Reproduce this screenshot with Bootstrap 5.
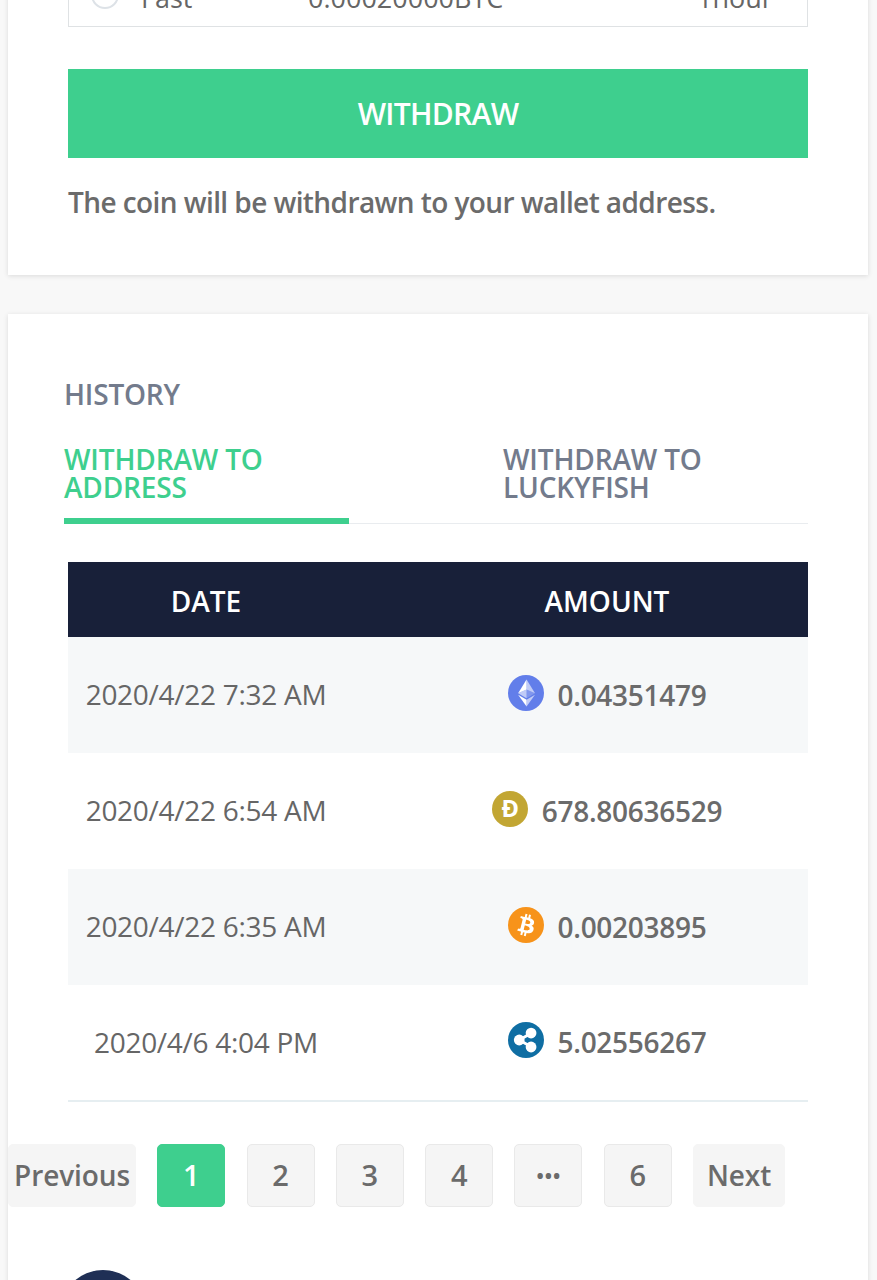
<!DOCTYPE html>
<html lang="en"><head><meta charset="utf-8"><title>Withdraw</title>
<link rel="stylesheet" href="https://cdn.jsdelivr.net/npm/bootstrap@5.3.0/dist/css/bootstrap.min.css">
<style>
html,body{height:1280px;overflow:hidden}
body{background:#f8f8f8;font-family:"Open Sans","Liberation Sans",sans-serif;color:#666;padding:0 9px 0 8px}
.panel{background:#fff;box-shadow:0 1px 5px rgba(0,0,0,.12)}
.panel-top{margin-top:-59px;height:334px;padding:0 60px;margin-bottom:39px}
.fee-box{height:86px;border:1px solid #dfe2e4;border-top:0;font-size:27px;font-weight:500;line-height:34px;padding-top:40px}
.fee-radio{width:28px;height:28px;border:2px solid #dde2e7;border-radius:50%;margin:0 22px 0 22px;flex:none}
.fee-name{width:167px}.fee-amt{width:389px}
.btn-withdraw{display:block;width:100%;height:89px;margin-top:42px;background:#3ecf8e;border:0;border-radius:0;color:#fff;font-size:30px;font-weight:600;letter-spacing:-.7px}
.btn-withdraw:hover{background:#3ecf8e;color:#fff}
.note{font-size:28px;font-weight:600;line-height:36px;margin:26px 0 0;letter-spacing:-.58px;color:#6b6b6b}
.panel-hist{height:1000px;padding:62px 60px 0}
.hist-title{font-size:28px;font-weight:600;color:#737b8c;line-height:36px;margin:0 0 0 -4px;letter-spacing:-.2px}
.tabs{margin:26px 0 38px -4px;border-bottom:1px solid #e9ecef;display:grid;grid-template-columns:285px 1fr}
.tabs a{display:block;font-size:28px;font-weight:600;line-height:28px;padding:7px 0 17px;color:#737b8c;text-decoration:none;letter-spacing:-.15px;margin-bottom:-1px;border-bottom:6px solid transparent}
.tabs a.on{color:#3ecf8e;border-bottom-color:#3ecf8e}
.tabs a+a{padding-left:154px}
.hist{--bs-table-bg:transparent;--bs-table-border-color:transparent;margin:0;border-bottom:2px solid #e6eef1;table-layout:fixed;color:#666}
.hist th{background:#182039;color:#fff;height:75px;font-size:28px;font-weight:600;vertical-align:middle;text-align:center;padding:2px 0 0;letter-spacing:0;border:0}
.hist td{height:116px;font-size:28px;vertical-align:middle;text-align:center;padding:0 0 2px;color:#666;letter-spacing:-.28px;border:0}
.hist tr>:first-child{width:338px;padding-right:62px}
.hist tbody tr:nth-child(odd) td{background:#f6f8f9}
.amt{display:inline-flex;align-items:center;gap:14px;font-weight:600;height:40px;vertical-align:middle;margin-top:-6px;color:#6b6b6b}
.amt svg{width:36px;height:36px;flex:none;margin-top:-4px}
.pager{list-style:none;margin:42px 0 0 -60px;padding:0;display:flex;gap:21.3px}
.pager a{display:flex;align-items:center;justify-content:center;width:68px;height:63px;padding-bottom:1px;background:#f5f5f5;border:1px solid #e9e9e9;border-radius:5px;color:#6b6b6b;font-size:29px;font-weight:600;text-decoration:none}
.pager .on a{background:#3ecf8e;border-color:#3ecf8e;color:#fff}
.pager .txt a{border-color:#f5f5f5;padding-bottom:1px;font-size:28px;letter-spacing:-.1px}
.pager .prev a{width:128px}.pager .nxt a{width:92px}
.pager .more{font-size:22px}
.avatar{width:86px;height:86px;border-radius:50%;background:#1f2f55;margin:63px 0 0 -8px}
</style></head>
<body>
<section class="panel panel-top">
  <div class="fee-box d-flex">
    <span class="fee-radio"></span><span class="fee-name">Fast</span><span class="fee-amt">0.00020000BTC</span><span>1hour</span>
  </div>
  <button class="btn btn-withdraw" type="button">WITHDRAW</button>
  <p class="note">The coin will be withdrawn to your wallet address.</p>
</section>
<section class="panel panel-hist">
  <h2 class="hist-title">HISTORY</h2>
  <nav class="tabs"><a class="on" href="#">WITHDRAW TO ADDRESS</a><a href="#">WITHDRAW TO LUCKYFISH</a></nav>
  <table class="table hist">
    <thead><tr><th>DATE</th><th>AMOUNT</th></tr></thead>
    <tbody>
      <tr><td>2020/4/22 7:32 AM</td><td><span class="amt">
        <svg viewBox="0 0 32 32"><circle cx="16" cy="16" r="16" fill="#627eea"/><path fill="#fff" fill-opacity=".6" d="M16.5 4v8.9l7.5 3.3z"/><path fill="#fff" d="M16.5 4 9 16.2l7.5-3.3z"/><path fill="#fff" fill-opacity=".6" d="M16.5 22v6L24 17.6z"/><path fill="#fff" d="M16.5 28v-6L9 17.6z"/><path fill="#fff" fill-opacity=".2" d="m16.5 20.6 7.5-4.4-7.5-3.3z"/><path fill="#fff" fill-opacity=".6" d="m9 16.2 7.5 4.4v-7.7z"/></svg>0.04351479</span></td></tr>
      <tr><td>2020/4/22 6:54 AM</td><td><span class="amt">
        <svg viewBox="0 0 32 32"><circle cx="16" cy="16" r="16" fill="#c2a633"/><text x="16" y="23.5" text-anchor="middle" font-family="Open Sans" font-weight="700" font-size="21" fill="#fff">Ð</text></svg>678.80636529</span></td></tr>
      <tr><td>2020/4/22 6:35 AM</td><td><span class="amt">
        <svg viewBox="0 0 32 32"><circle cx="16" cy="16" r="16" fill="#f7931a"/><path fill="#fff" d="M23.189 14.02c.314-2.096-1.283-3.223-3.465-3.975l.708-2.84-1.728-.43-.69 2.765c-.454-.114-.92-.22-1.385-.326l.695-2.783L15.596 6l-.708 2.839c-.376-.086-.746-.17-1.104-.26l.002-.009-2.384-.595-.46 1.846s1.283.294 1.256.312c.7.175.826.638.805 1.006l-.806 3.235c.048.012.11.03.18.057l-.183-.045-1.13 4.532c-.086.212-.303.531-.793.41.018.025-1.256-.313-1.256-.313l-.858 1.978 2.25.561c.418.105.828.215 1.231.318l-.715 2.872 1.727.43.708-2.84c.472.127.93.245 1.378.357l-.706 2.828 1.728.43.715-2.866c2.948.558 5.164.333 6.097-2.333.752-2.146-.037-3.385-1.588-4.192 1.13-.26 1.98-1.003 2.207-2.538zm-3.95 5.538c-.533 2.147-4.148.986-5.32.695l.95-3.805c1.172.293 4.929.872 4.37 3.11zm.535-5.569c-.487 1.953-3.495.96-4.47.717l.86-3.45c.975.243 4.118.696 3.61 2.733z"/></svg>0.00203895</span></td></tr>
      <tr><td>2020/4/6 4:04 PM</td><td><span class="amt">
        <svg viewBox="0 0 32 32"><circle cx="16" cy="16" r="16" fill="#0f6ea3"/><path stroke="#fff" stroke-width="2.5" d="M10 16 20.5 10M10 16l10.500 6"/><circle cx="10" cy="16" r="4.800" fill="#fff"/><circle cx="20.500" cy="9.800" r="4.800" fill="#fff"/><circle cx="20.500" cy="22.200" r="4.800" fill="#fff"/></svg>5.02556267</span></td></tr>
    </tbody>
  </table>
  <ul class="pager">
    <li class="txt prev"><a href="#">Previous</a></li>
    <li class="on"><a href="#">1</a></li><li><a href="#">2</a></li><li><a href="#">3</a></li><li><a href="#">4</a></li><li><a class="more" href="#">•••</a></li><li><a href="#">6</a></li>
    <li class="txt nxt"><a href="#">Next</a></li>
  </ul>
  <div class="avatar"></div>
</section>
<script src="https://cdn.jsdelivr.net/npm/bootstrap@5.3.0/dist/js/bootstrap.bundle.min.js"></script>
</body></html>
